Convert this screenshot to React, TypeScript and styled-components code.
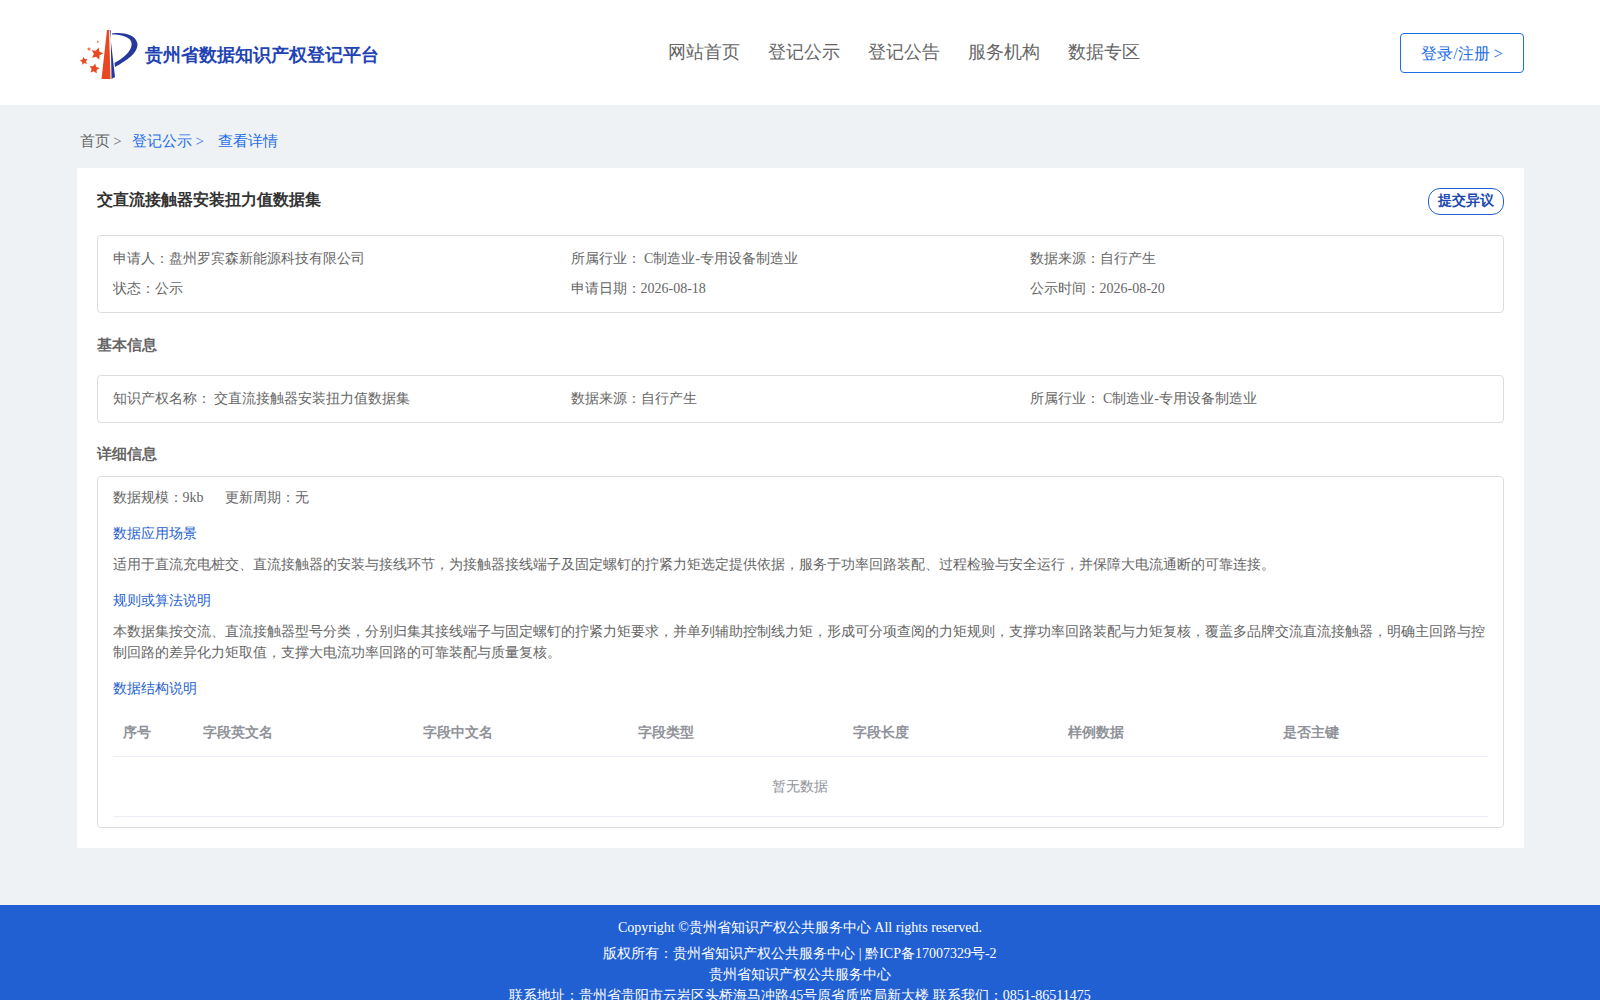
import React from "react";
import styled, { createGlobalStyle } from "styled-components";

const GlobalStyle = createGlobalStyle`
  html, body {
    margin: 0;
    padding: 0;
    background: #eff2f5;
    font-family: "Liberation Serif", serif;
    font-size: 14px;
    color: #666;
  }
  * {
    box-sizing: border-box;
  }
`;

const navItems = ["网站首页", "登记公示", "登记公告", "服务机构", "数据专区"];
const columns = [
  { name: "序号", width: 80 },
  { name: "字段英文名", width: 220 },
  { name: "字段中文名", width: 215 },
  { name: "字段类型", width: 215 },
  { name: "字段长度", width: 215 },
  { name: "样例数据", width: 215 },
  { name: "是否主键", width: 215 },
];

const starPoints = (cx: number, cy: number, r: number, rot: number) => {
  const pts: string[] = [];
  for (let i = 0; i < 10; i++) {
    const rad = i % 2 === 0 ? r : r * 0.48;
    const a = ((rot + i * 36 - 90) * Math.PI) / 180;
    pts.push(`${(cx + rad * Math.cos(a)).toFixed(2)},${(cy + rad * Math.sin(a)).toFixed(2)}`);
  }
  return pts.join(" ");
};

const Logo = () => (
  <svg width="58" height="52" viewBox="0 0 58 52">
    <polygon points="27,2 29,2 30.5,51 21.5,51" fill="#e8481f" />
    <polygon points="29.6,2 35,49 31.5,51 30.6,2" fill="#26389b" />
    <path
      d="M32 5.5 C42 4 55 6 57.3 15 C59 24 48 32 35 39 L34.5 35 C42 31 51.5 24 51.7 16 C51.5 9 42 6.5 32 6.5 Z"
      fill="#26389b"
    />
    <polygon points={starPoints(17, 25.7, 6.4, 15)} fill="#e8481f" />
    <polygon points={starPoints(4, 33, 4.2, -10)} fill="#e8481f" />
    <polygon points={starPoints(14.3, 40.7, 5.4, 10)} fill="#e8481f" />
    <circle cx="9" cy="21" r="1.6" fill="#ee7a50" />
    <circle cx="17.7" cy="13.7" r="1" fill="#ee7a50" />
  </svg>
);

export default function App() {
  return (
    <>
      <GlobalStyle />
      <Header>
        <Brand>
          <Logo />
          <BrandName>贵州省数据知识产权登记平台</BrandName>
        </Brand>
        <Nav>
          {navItems.map((item) => (
            <NavItem key={item}>{item}</NavItem>
          ))}
        </Nav>
        <LoginButton>登录/注册 &gt;</LoginButton>
      </Header>
      <Main>
        <Breadcrumb>
          <span>首页 &gt;</span>
          <Crumb>登记公示 &gt;</Crumb>
          <Crumb $wide>查看详情</Crumb>
        </Breadcrumb>
        <Card>
          <TitleRow>
            <Title>交直流接触器安装扭力值数据集</Title>
            <ObjectionButton>提交异议</ObjectionButton>
          </TitleRow>
          <InfoBox>
            <InfoGrid>
              <span>申请人：盘州罗宾森新能源科技有限公司</span>
              <span>所属行业： C制造业-专用设备制造业</span>
              <span>数据来源：自行产生</span>
              <span>状态：公示</span>
              <span>申请日期：2026-08-18</span>
              <span>公示时间：2026-08-20</span>
            </InfoGrid>
          </InfoBox>
          <SectionTitle>基本信息</SectionTitle>
          <InfoBox>
            <InfoGrid>
              <span>知识产权名称： 交直流接触器安装扭力值数据集</span>
              <span>数据来源：自行产生</span>
              <span>所属行业： C制造业-专用设备制造业</span>
            </InfoGrid>
          </InfoBox>
          <DetailTitle>详细信息</DetailTitle>
          <DetailBox>
            <ScaleRow>
              <span>数据规模：9kb</span>
              <span>更新周期：无</span>
            </ScaleRow>
            <SubTitle>数据应用场景</SubTitle>
            <Paragraph>
              适用于直流充电桩交、直流接触器的安装与接线环节，为接触器接线端子及固定螺钉的拧紧力矩选定提供依据，服务于功率回路装配、过程检验与安全运行，并保障大电流通断的可靠连接。
            </Paragraph>
            <SubTitle>规则或算法说明</SubTitle>
            <Paragraph>
              本数据集按交流、直流接触器型号分类，分别归集其接线端子与固定螺钉的拧紧力矩要求，并单列辅助控制线力矩，形成可分项查阅的力矩规则，支撑功率回路装配与力矩复核，覆盖多品牌交流直流接触器，明确主回路与控制回路的差异化力矩取值，支撑大电流功率回路的可靠装配与质量复核。
            </Paragraph>
            <SubTitle>数据结构说明</SubTitle>
            <TableHead>
              {columns.map((col) => (
                <HeadCell key={col.name} $width={col.width}>
                  {col.name}
                </HeadCell>
              ))}
            </TableHead>
            <EmptyRow>暂无数据</EmptyRow>
          </DetailBox>
        </Card>
      </Main>
      <Footer>
        <FooterFirst>Copyright ©贵州省知识产权公共服务中心 All rights reserved.</FooterFirst>
        <FooterLine>版权所有：贵州省知识产权公共服务中心 | 黔ICP备17007329号-2</FooterLine>
        <FooterLine>贵州省知识产权公共服务中心</FooterLine>
        <FooterLine>联系地址：贵州省贵阳市云岩区头桥海马冲路45号原省质监局新大楼 联系我们：0851-86511475</FooterLine>
      </Footer>
    </>
  );
}

const Header = styled.header`
  height: 105px;
  background: #fff;
  padding: 0 76px 0 80px;
  display: flex;
  align-items: center;
  justify-content: space-between;
`;

const Brand = styled.div`
  width: 300px;
  display: flex;
  align-items: center;
  gap: 7px;
  padding-top: 2px;
`;

const BrandName = styled.div`
  font-size: 18px;
  font-weight: 700;
  color: #2343b4;
  white-space: nowrap;
  padding-top: 2px;
`;

const Nav = styled.nav`
  display: flex;
  gap: 28px;
  margin-left: 28px;
  padding-bottom: 2px;
`;

const NavItem = styled.a`
  font-size: 18px;
  color: #666;
`;

const LoginButton = styled.button`
  width: 124px;
  height: 40px;
  padding: 4px 0 0;
  background: #fff;
  border: 1px solid #1e6ee6;
  border-radius: 4px;
  color: #1e6ee6;
  font: inherit;
  font-size: 16px;
`;

const Main = styled.main`
  width: 1447px;
  margin: 0 auto;
  padding-bottom: 57px;
`;

const Breadcrumb = styled.div`
  height: 63px;
  padding: 10px 0 0 3px;
  display: flex;
  align-items: center;
  font-size: 15px;
  color: #666;
`;

const Crumb = styled.a<{ $wide?: boolean }>`
  margin-left: ${(p) => (p.$wide ? "14px" : "10px")};
  color: #1e6ee6;
`;

const Card = styled.section`
  background: #fff;
  padding: 20px;
  height: 680px;
`;

const TitleRow = styled.div`
  display: flex;
  justify-content: space-between;
  align-items: flex-start;
`;

const Title = styled.h1`
  margin: 0;
  font-size: 16px;
  font-weight: 700;
  color: #333;
  line-height: 24px;
`;

const ObjectionButton = styled.button`
  width: 76px;
  height: 27px;
  padding: 0 0 1px;
  background: #fff;
  border: 1px solid #1f5fd0;
  border-radius: 12px;
  color: #2148b0;
  font: inherit;
  font-size: 14px;
  font-weight: 700;
`;

const InfoBox = styled.div`
  margin-top: 20px;
  padding: 8px 15px 9px;
  border: 1px solid #ddd;
  border-radius: 4px;
`;

const InfoGrid = styled.div`
  display: grid;
  grid-template-columns: 458px 459px 1fr;
  row-gap: 9px;
  line-height: 21px;
  padding: 4px 0;
`;

const SectionTitle = styled.h2`
  margin: 22px 0 0;
  font-size: 15px;
  font-weight: 700;
  color: #666;
  line-height: 20px;
`;

const DetailTitle = styled(SectionTitle)`
  margin-top: 21px;
`;

const DetailBox = styled.div`
  margin-top: 12px;
  padding: 10px 15px;
  border: 1px solid #ddd;
  border-radius: 4px;
  line-height: 21px;
`;

const ScaleRow = styled.div`
  display: flex;
  gap: 21px;
`;

const SubTitle = styled.div`
  margin-top: 15px;
  color: #1f5fd0;
`;

const Paragraph = styled.p`
  margin: 10px 0 0;
  color: #666;
`;

const TableHead = styled.div`
  margin-top: 10px;
  display: flex;
  height: 48px;
  align-items: center;
  border-bottom: 1px solid #ebeef5;
`;

const HeadCell = styled.div<{ $width: number }>`
  width: ${(p) => p.$width}px;
  padding-left: 10px;
  font-weight: 700;
  color: #909399;
`;

const EmptyRow = styled.div`
  height: 60px;
  display: flex;
  align-items: center;
  justify-content: center;
  color: #909399;
  border-bottom: 1px solid #ebeef5;
`;

const Footer = styled.footer`
  background: #2160d3;
  color: #fff;
  text-align: center;
  padding: 12px 0 20px;
  line-height: 21px;
`;

const FooterFirst = styled.div`
  margin-bottom: 5px;
`;

const FooterLine = styled.div``;
